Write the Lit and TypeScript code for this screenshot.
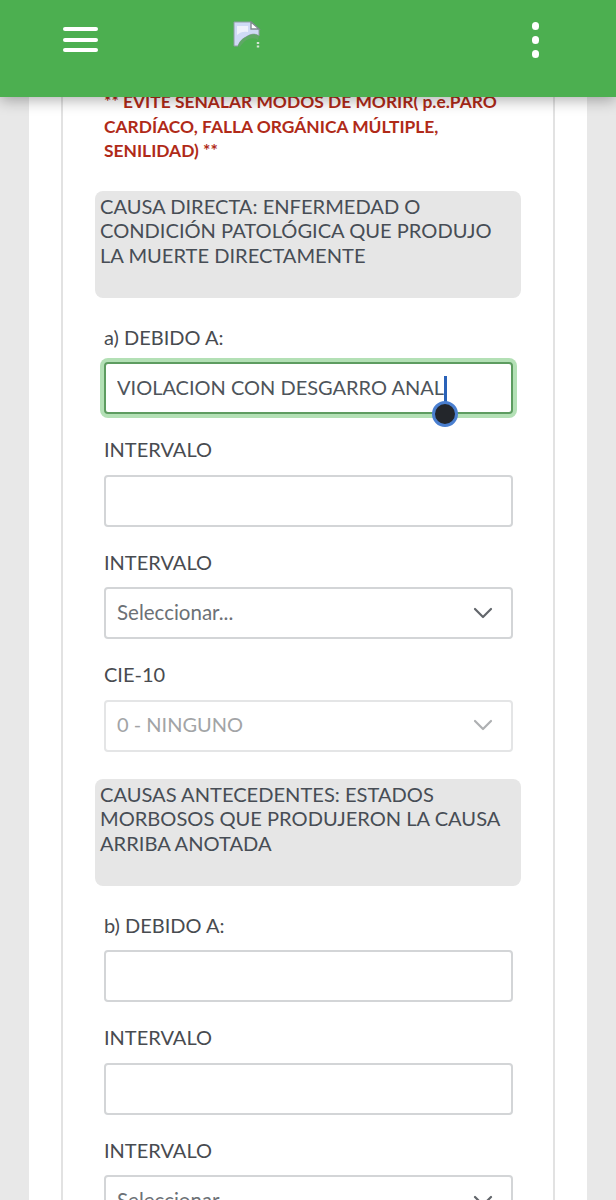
import { LitElement, html, css } from "lit";
import { customElement } from "lit/decorators.js";

const chevron = html`<svg class="chev" viewBox="0 0 20 12" fill="none" stroke="currentColor" stroke-width="2.2" stroke-linecap="round" stroke-linejoin="round"><path d="M2 2 L10 10 L18 2"/></svg>`;

@customElement("app-root")
export class AppRoot extends LitElement {
  static styles = css`
    :host { display: block; width: 616px; height: 1200px; overflow: hidden; background: #e8e8e8;
      font-family: "Lato", "Noto Sans", sans-serif; color: #4a4f55; }
    header { position: relative; z-index: 2; height: 97px; background: #4caf50;
      box-shadow: 0 3px 14px rgba(0,0,0,.32); display: flex; align-items: flex-start;
      padding: 21px 77px 0 63px; box-sizing: border-box; }
    .burger { width: 35px; display: flex; flex-direction: column; gap: 6.5px; padding-top: 6px; }
    .burger i { display: block; height: 4px; border-radius: 2px; background: #fff; }
    .logo { width: 28px; height: 27px; margin-left: 135px; }
    .dots { display: flex; flex-direction: column; gap: 6.5px; padding-top: 1px; margin-left: auto; }
    .dots i { display: block; width: 7.5px; height: 7.5px; border-radius: 50%; background: #fff; }
    .sheet { margin: 0 29px; background: #fff; height: 1103px; padding: 0 32px 0 31.5px; box-sizing: border-box; }
    .card { border: solid #e2e2e2; border-width: 0 2px; height: 100%; padding: 0 32.5px; box-sizing: border-box; }
    .warn { position: relative; top: -7px; margin: 0 6px 0 9px; padding: 0; color: #b02a18; font-weight: 700; font-size: 17.4px; line-height: 24.5px; }
    .box { margin-top: 20px; height: 107px; background: #e6e6e6; border-radius: 8px; padding: 3px 5px;
      box-sizing: border-box; font-size: 20.1px; line-height: 24.6px; color: #474d55; }
    .box.next { margin-top: 4px; }
    .fields { padding: 0 8px 0 9px; }
    .field { height: 112.5px; }
    .first { margin-top: 27px; }
    label { display: block; font-size: 20px; line-height: 26px; height: 26px; color: #484b50; margin-bottom: 11.5px; position: relative; top: -1px; }
    .ctl { position: relative; height: 52px; box-sizing: border-box; width: 100%; border: 2px solid #d3d5d7; border-radius: 4px;
      background: #fff; display: flex; align-items: center; justify-content: space-between; padding: 0 18px 1px 11px;
      font: inherit; font-size: 20px; color: #4e545a; margin: 0; }
    .ctl span { position: relative; top: -1px; }
    input.ctl { outline: none; display: block; padding-bottom: 2px; }
    .focus { border-color: #5d9c60; box-shadow: 0 0 0 4px #b3e0b5; }
    .wrap { position: relative; }
    .caret { position: absolute; left: 340px; top: 14px; width: 3px; height: 27px; background: #2a62b8; }
    .handle { position: absolute; left: 327.5px; top: 38.5px; width: 20px; height: 20px; border-radius: 50%;
      background: #23262b; border: 3.5px solid #4a7fd0; }
    .chev { width: 20px; height: 12px; color: #62666b; }
    .ph { color: #6c7176; font-size: 20.5px; }
    .off { color: #a2a4a6; border-color: #e4e5e6; }
    .off .chev { color: #aeb0b2; }
  `;

  private logo() {
    return html`<svg class="logo" viewBox="0 0 28 27">
      <path d="M1 1 H18 L26 8 V15 C22 12 17 13 13 16 C9 18 7 20 5 25 H1 Z" fill="#cfdaf5" stroke="#8f9aa3" stroke-width="1"/>
      <path d="M4 5 H15 V11 C11 10 7 11 4 14 Z" fill="#eef1fb"/>
      <path d="M18 1 V8 H26 Z" fill="#fff" stroke="#7f8a90" stroke-width="1.4"/>
      <path d="M5 25 C7 20 9 18 13 16 C17 13 22 12 26 15 L25 19 C21 16 16 17 12 20 C10 22 8 24 7 26 Z" fill="#5fa865"/>
      <path d="M25 21 V23 M25 24.500 V26.500" stroke="#d5e4d5" stroke-width="2.4"/>
    </svg>`;
  }

  private text(lbl: string) {
    return html`<div class="field"><label>${lbl}</label><input class="ctl" aria-label=${lbl} /></div>`;
  }

  private select(lbl: string, val: string, off = false) {
    return html`<div class="field"><label>${lbl}</label><div class="ctl ${off ? "off" : ""}"><span class=${off ? "" : "ph"}>${val}</span>${chevron}</div></div>`;
  }

  render() {
    return html`
      <header>
        <div class="burger"><i></i><i></i><i></i></div>
        ${this.logo()}
        <div class="dots"><i></i><i></i><i></i></div>
      </header>
      <div class="sheet"><div class="card">
        <p class="warn">** EVITE SEÑALAR MODOS DE MORIR( p.e.PARO CARDÍACO, FALLA ORGÁNICA MÚLTIPLE, SENILIDAD) **</p>
        <div class="box">CAUSA DIRECTA: ENFERMEDAD O CONDICIÓN PATOLÓGICA QUE PRODUJO LA MUERTE DIRECTAMENTE</div>
        <div class="fields">
          <div class="field first">
            <label>a) DEBIDO A:</label>
            <div class="wrap">
              <input class="ctl focus" aria-label="a) DEBIDO A" value="VIOLACION CON DESGARRO ANAL" />
              <div class="caret"></div><div class="handle"></div>
            </div>
          </div>
          ${this.text("INTERVALO")}
          ${this.select("INTERVALO", "Seleccionar...")}
          ${this.select("CIE-10", "0 - NINGUNO", true)}
        </div>
        <div class="box next">CAUSAS ANTECEDENTES: ESTADOS MORBOSOS QUE PRODUJERON LA CAUSA ARRIBA ANOTADA</div>
        <div class="fields">
          <div class="field first">
            <label>b) DEBIDO A:</label><input class="ctl" aria-label="b) DEBIDO A" />
          </div>
          ${this.text("INTERVALO")}
          ${this.select("INTERVALO", "Seleccionar...")}
        </div>
      </div></div>
    `;
  }
}
